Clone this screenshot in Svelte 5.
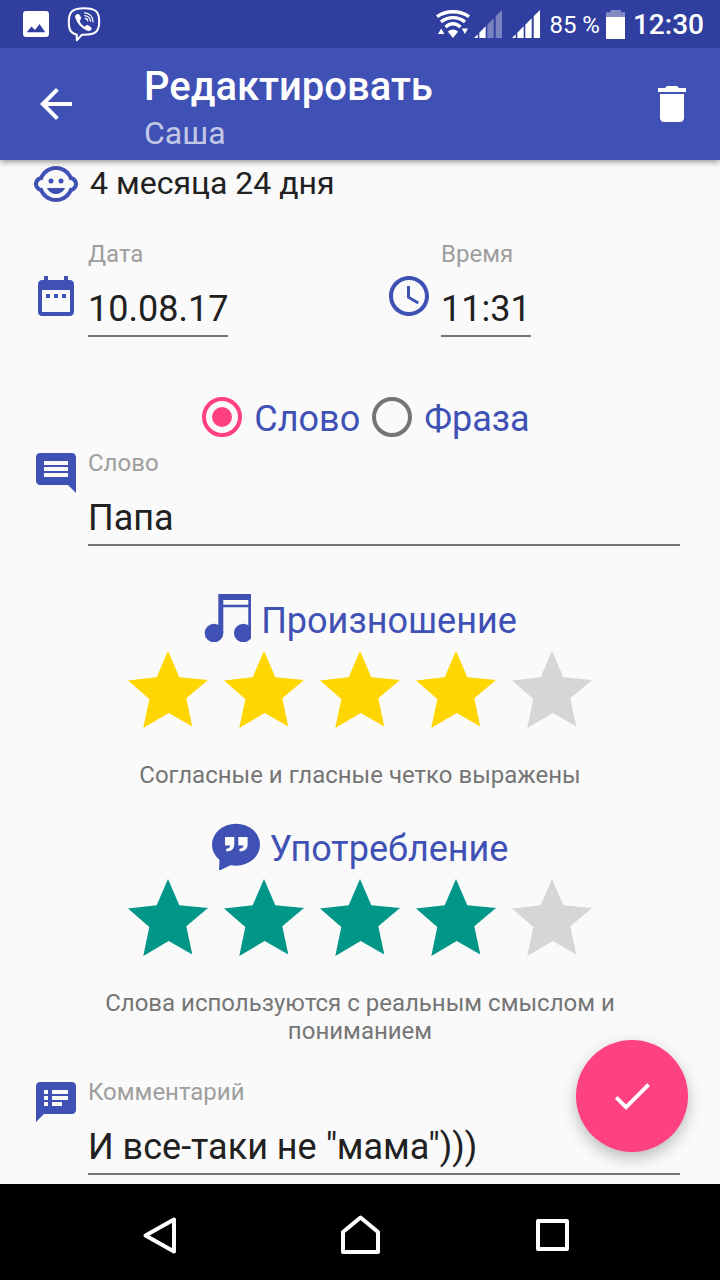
<script>
  let date = $state('10.08.17');
  let time = $state('11:31');
  let kind = $state('word');
  let word = $state('Папа');
  let comment = $state('И все-таки не "мама")))');

  let ratings = $state([
    {
      id: 'speech',
      title: 'Произношение',
      value: 4,
      tone: 'gold',
      note: 'Согласные и гласные четко выражены',
    },
    {
      id: 'usage',
      title: 'Употребление',
      value: 4,
      tone: 'teal',
      note: 'Слова используются с реальным смыслом и пониманием',
    },
  ]);

  const kinds = [
    { id: 'word', label: 'Слово' },
    { id: 'phrase', label: 'Фраза' },
  ];

  const icons = {
    back: 'M20 11H7.83l5.59-5.59L12 4l-8 8 8 8 1.41-1.41L7.83 13H20v-2z',
    trash: 'M6 19c0 1.1.9 2 2 2h8c1.1 0 2-.9 2-2V7H6v12zM19 4h-3.5l-1-1h-5l-1 1H5v2h14V4z',
    child:
      'M22.94 12.66c.04-.21.06-.43.06-.66s-.02-.45-.06-.66c-.25-1.51-1.36-2.74-2.81-3.17-.53-1.12-1.28-2.1-2.19-2.91C16.36 3.85 14.28 3 12 3s-4.36.85-5.94 2.26c-.92.81-1.67 1.8-2.19 2.91-1.45.43-2.56 1.65-2.81 3.17-.04.21-.06.43-.06.66s.02.45.06.66c.25 1.51 1.36 2.74 2.81 3.17.52 1.11 1.27 2.09 2.17 2.89C7.62 20.14 9.71 21 12 21s4.38-.86 5.97-2.28c.9-.8 1.65-1.79 2.17-2.89 1.44-.43 2.55-1.65 2.8-3.17zM19 14c-.1 0-.19-.02-.29-.03-.2.67-.49 1.29-.86 1.86C16.6 17.74 14.45 19 12 19s-4.6-1.26-5.85-3.17c-.37-.57-.66-1.19-.86-1.86-.1.01-.19.03-.29.03-1.1 0-2-.9-2-2s.9-2 2-2c.1 0 .19.02.29.03.2-.67.49-1.29.86-1.86C7.4 6.26 9.55 5 12 5s4.6 1.26 5.85 3.17c.37.57.66 1.19.86 1.86.1-.01.19-.03.29-.03 1.1 0 2 .9 2 2s-.9 2-2 2zM7.5 14c.76 1.77 2.49 3 4.5 3s3.74-1.23 4.5-3h-9z',
    calendar:
      'M9 11H7v2h2v-2zm4 0h-2v2h2v-2zm4 0h-2v2h2v-2zm2-7h-1V2h-2v2H8V2H6v2H5c-1.11 0-1.99.9-1.99 2L3 20c0 1.1.89 2 2 2h14c1.1 0 2-.9 2-2V6c0-1.1-.9-2-2-2zm0 16H5V9h14v11z',
    clock:
      'M11.99 2C6.47 2 2 6.48 2 12s4.47 10 9.99 10C17.52 22 22 17.52 22 12S17.52 2 11.99 2zM12 20c-4.42 0-8-3.58-8-8s3.58-8 8-8 8 3.58 8 8-3.58 8-8 8zm.5-13H11v6l5.25 3.15.75-1.23-4.5-2.67z',
    comment:
      'M21.99 4c0-1.1-.89-2-1.99-2H4c-1.1 0-2 .9-2 2v12c0 1.1.9 2 2 2h14l4 4-.01-18zM18 14H6v-2h12v2zm0-3H6V9h12v2zm0-3H6V6h12v2z',
    notes:
      'M20 2H4c-1.1 0-1.99.9-1.99 2L2 22l4-4h14c1.1 0 2-.9 2-2V4c0-1.1-.9-2-2-2zM8 14H6v-2h2v2zm0-3H6V9h2v2zm0-3H6V6h2v2zm7 6h-5v-2h5v2zm3-3h-8V9h8v2zm0-3h-8V6h8v2z',
    done: 'M9 16.2L4.8 12l-1.4 1.4L9 19 21 7l-1.4-1.4L9 16.2z',
  };
</script>

{#snippet icon(path)}
  <svg class="icon" viewBox="0 0 24 24" aria-hidden="true"><path d={path} /></svg>
{/snippet}

{#snippet signal(weak)}
  <svg class="signal" viewBox="0 0 28 28" aria-hidden="true">
    <path d="M0 28L3.7 24.3V28ZM5.3 28V22.7L11.7 16.3V28Z" />
    <path opacity={weak ? 0.35 : 1} d="M13.3 28V14.7L19.7 8.3V28ZM21.7 28V6.3L28 0V28Z" />
  </svg>
{/snippet}

<div class="screen">
  <div class="top">
    <div class="status">
      <div class="notices">
        <svg class="picture" viewBox="0 0 26 26" aria-hidden="true">
          <path fill-rule="evenodd" d="M3 0H23Q26 0 26 3V23Q26 26 23 26H3Q0 26 0 23V3Q0 0 3 0ZM3.700 21.300H22.300L16.500 13L12 19L8.500 15.500Z" />
        </svg>
        <svg class="viber" viewBox="0 0 36 36" aria-hidden="true">
          <path
            fill="none"
            stroke="currentColor"
            stroke-width="2"
            stroke-linejoin="round"
            d="M9.500 28.200C5 26.800 3 24.500 2.800 17C2.600 6 6 2.200 18 2.200C30 2.200 33.200 6 33.200 15.500C33.200 25 30 28.700 18 28.700L16 28.600L10.800 34.200V28.600Z"
          />
          <path d="M10.500 8.500C12 7.500 13 8 14.500 10.500C15.600 12.300 15.300 13 13.600 14.500C14.300 17.500 16.300 19.700 19 20.700C20.500 18.800 21.300 18.600 23.300 20C26 21.800 26.300 22.700 25 24C23.700 25.300 22.500 25.300 20.300 24.200C15 21.500 11.200 17.500 9.300 12C8.700 10.200 9.200 9.300 10.500 8.500Z" />
          <path
            fill="none"
            stroke="currentColor"
            stroke-width="1.200"
            stroke-linecap="round"
            d="M18.500 6.800C23.500 7.200 27 10.500 27 15.800M18.800 9.600C22.300 10 24.300 12 24.400 15.200M19.200 12.300C20.800 12.500 21.700 13.300 21.800 14.900"
          />
        </svg>
      </div>
      <div class="system">
        <svg class="wifi" viewBox="0 0 34 28" aria-hidden="true">
          <path
            fill="none"
            stroke="currentColor"
            stroke-width="3.300"
            d="M1 6.600C10 .1 24 .1 33 6.600M5 11.900C12 6.200 22 6.200 29 11.900M9.500 17.200C14 12.600 20 12.600 24.500 17.200"
          />
          <path d="M17 28L11.800 21.500Q17 17.300 22.200 21.500ZM2 24L5.200 18.500L8.400 24ZM25.800 18.500H32L28.900 24Z" />
        </svg>
        {@render signal(true)}
        <span class="gap"></span>
        {@render signal(false)}
        <span class="percent">85 %</span>
        <svg class="battery" viewBox="0 0 19 29" aria-hidden="true">
          <path opacity=".4" d="M4.500 0H15V2.300H19V7H0V2.300H4.500Z" />
          <path d="M0 7H19V29H0Z" />
        </svg>
        <span class="now">12:30</span>
      </div>
    </div>

    <header class="bar">
      <button class="plain" type="button" aria-label="Назад">{@render icon(icons.back)}</button>
      <div class="titles">
        <h1>Редактировать</h1>
        <p>Саша</p>
      </div>
      <button class="plain" type="button" aria-label="Удалить">{@render icon(icons.trash)}</button>
    </header>
  </div>

  <main>
    <div class="age">
      <svg class="icon" viewBox="0 0 24 24" aria-hidden="true">
        <circle cx="14.5" cy="10.5" r="1.25" />
        <circle cx="9.5" cy="10.5" r="1.25" />
        <path d={icons.child} />
      </svg>
      <span>4 месяца 24 дня</span>
    </div>

    <div class="when">
      <div class="field low">
        {@render icon(icons.calendar)}
        <div class="entry">
          <label for="date">Дата</label>
          <input class="fit" id="date" type="text" size="7" bind:value={date} />
        </div>
      </div>
      <div class="field low">
        {@render icon(icons.clock)}
        <div class="entry">
          <label for="time">Время</label>
          <input class="fit" id="time" type="text" size="4" bind:value={time} />
        </div>
      </div>
    </div>

    <div class="kinds" role="radiogroup" aria-label="Тип записи">
      {#each kinds as k (k.id)}
        <label class="kind">
          <input type="radio" name="kind" value={k.id} bind:group={kind} />
          <span>{k.label}</span>
        </label>
      {/each}
    </div>

    <div class="field">
      {@render icon(icons.comment)}
      <div class="entry">
        <label for="word">Слово</label>
        <input id="word" type="text" bind:value={word} />
      </div>
    </div>

    <div class="ratings">
      {#each ratings as r (r.id)}
        <section>
          <h2>
            {#if r.id === 'speech'}
              <svg class="icon" viewBox="0 0 48 48" aria-hidden="true">
                <path d="M15.300 0H48V39H45.300V13.300H20.300V39H15.300ZM20.300 6V10.700H45.300V6Z" fill-rule="evenodd" />
                <circle cx="11" cy="39" r="9.3" />
                <circle cx="40.300" cy="39" r="9.3" />
              </svg>
            {:else}
              <svg class="icon" viewBox="0 0 48 48" aria-hidden="true">
                <ellipse cx="24" cy="22.700" rx="24" ry="21" />
                <path d="M7.700 34L7 48H8.500L20 42.500Z" />
                <path
                  fill="#fafafa"
                  d="M13 15H22.300V22.500C22.300 27 19 29.400 14.500 29.400L14 27C16.500 26.600 18.300 25.200 18.300 23.500H13ZM26.300 15H35.600V22.500C35.600 27 32.300 29.400 27.800 29.400L27.300 27C29.800 26.600 31.600 25.200 31.600 23.500H26.300Z"
                />
              </svg>
            {/if}
            <span>{r.title}</span>
          </h2>
          <div class="stars {r.tone}">
            {#each [1, 2, 3, 4, 5] as n (n)}
              <button
                type="button"
                class="star"
                class:on={n <= r.value}
                aria-label="{r.title}: {n}"
                aria-pressed={n <= r.value}
                onclick={() => (r.value = n)}
              >
                <svg viewBox="0 0 96 96" aria-hidden="true">
                  <path d="M48 9L59.300 35.300L88 38L66.300 56.300L72.300 84.500L48.700 71L23.300 86L29.300 57L8 38.500L36.700 35.300Z" />
                </svg>
              </button>
            {/each}
          </div>
          <p class="note">{r.note}</p>
        </section>
      {/each}
    </div>

    <div class="field">
      {@render icon(icons.notes)}
      <div class="entry">
        <label for="comment">Комментарий</label>
        <input id="comment" type="text" bind:value={comment} />
      </div>
    </div>
  </main>

  <div class="bottom">
    <button class="fab" type="button" aria-label="Сохранить">{@render icon(icons.done)}</button>
    <nav aria-label="Система">
      <button type="button" aria-label="Назад">
        <svg viewBox="0 0 56 56" aria-hidden="true"><path d="M5.500 31.500L34 15.500V47.500Z" /></svg>
      </button>
      <button type="button" aria-label="Домой">
        <svg viewBox="0 0 56 56" aria-hidden="true"><path d="M11 28L28.500 13.500L46 28V48H11Z" /></svg>
      </button>
      <button type="button" aria-label="Недавние">
        <svg viewBox="0 0 56 56" aria-hidden="true"><path d="M14 17H43V45H14Z" /></svg>
      </button>
    </nav>
  </div>
</div>

<style>
  :global(body) {
    background: #fafafa;
  }

  .screen {
    display: flex;
    flex-direction: column;
    min-height: 100vh;
    background: #fafafa;
    color: #212121;
    font-family: Roboto, 'Noto Sans', sans-serif;
  }

  h1,
  h2,
  p {
    margin: 0;
    font-weight: 400;
  }

  button {
    display: flex;
    align-items: center;
    justify-content: center;
    padding: 0;
    border: 0;
    background: none;
    color: inherit;
    cursor: pointer;
  }

  svg {
    display: block;
    flex: none;
    fill: currentColor;
  }

  .icon {
    width: 48px;
    height: 48px;
  }

  .top {
    position: sticky;
    top: 0;
    z-index: 2;
    color: #fff;
    box-shadow: 0 2px 6px rgba(0, 0, 0, 0.4);
  }

  .status {
    display: flex;
    align-items: center;
    justify-content: space-between;
    height: 48px;
    padding: 0 16px 0 23px;
    background: #303f9f;
  }

  .notices,
  .system {
    display: flex;
    align-items: center;
  }

  .notices {
    gap: 17px;
  }

  .system {
    gap: 4px;
  }

  .picture {
    width: 26px;
    height: 26px;
  }

  .viber {
    width: 36px;
    height: 36px;
  }

  .wifi {
    width: 34px;
    height: 28px;
  }

  .signal {
    width: 28px;
    height: 28px;
  }

  .gap {
    width: 2px;
  }

  .percent {
    padding: 2px 2px 0 5px;
    font-size: 24px;
    line-height: 28px;
  }

  .battery {
    width: 19px;
    height: 29px;
  }

  .now {
    padding: 2px 0 0 4px;
    font-size: 28px;
    font-weight: 500;
    line-height: 32px;
  }

  .bar {
    display: flex;
    align-items: center;
    height: 112px;
    padding: 0 24px 0 32px;
    background: #3f51b5;
  }

  .titles {
    flex: 1;
    min-width: 0;
    padding: 8px 0 0 64px;
  }

  h1 {
    font-size: 40px;
    font-weight: 500;
    line-height: 50px;
  }

  .titles p {
    color: rgba(255, 255, 255, 0.7);
    font-size: 32px;
    line-height: 42px;
  }

  main {
    flex: 1;
    padding-bottom: 9px;
  }

  .age {
    display: flex;
    align-items: flex-start;
    gap: 10px;
    height: 48px;
    padding: 0 40px 0 32px;
    font-size: 32px;
    line-height: 46px;
  }

  .age .icon,
  .field .icon,
  h2 {
    color: #3f51b5;
  }

  .when {
    display: grid;
    grid-template-columns: 1fr 1fr;
    padding: 32px 0 48px;
  }

  .when .field {
    padding-right: 0;
  }

  .when .field + .field {
    padding-left: 25px;
  }

  .field {
    display: flex;
    align-items: flex-start;
    gap: 8px;
    padding: 0 40px 0 32px;
  }

  .low .icon {
    margin-top: 32px;
  }

  .entry {
    display: flex;
    flex: 1;
    flex-direction: column;
    align-items: flex-start;
    min-width: 0;
  }

  .entry label {
    color: #9e9e9e;
    font-size: 24px;
    line-height: 28px;
  }

  .entry input {
    box-sizing: border-box;
    width: 100%;
    height: 69px;
    margin: 0;
    padding: 15px 0 0;
    border: 0;
    border-bottom: 2px solid #757575;
    border-radius: 0;
    outline: 0;
    background: none;
    color: #212121;
    font-family: inherit;
    font-size: 36px;
  }

  .entry .fit {
    width: auto;
    field-sizing: content;
  }

  .kinds {
    display: flex;
    justify-content: center;
  }

  .kind {
    display: flex;
    align-items: center;
    height: 64px;
    color: #3f51b5;
    font-size: 36px;
    line-height: 42px;
    cursor: pointer;
  }

  .kind span {
    padding-top: 4px;
  }

  h2 span {
    padding-top: 6px;
  }

  .kind input {
    display: grid;
    place-items: center;
    box-sizing: border-box;
    width: 40px;
    height: 40px;
    margin: 0 12px;
    border: 4px solid #757575;
    border-radius: 50%;
    appearance: none;
  }

  .kind input:checked {
    border-color: #ff4081;
  }

  .kind input:checked::before {
    width: 20px;
    height: 20px;
    border-radius: 50%;
    background: #ff4081;
    content: '';
  }

  .ratings {
    display: flex;
    flex-direction: column;
    gap: 33px;
    padding: 48px 40px 33px;
  }

  h2 {
    display: flex;
    align-items: center;
    justify-content: center;
    gap: 10px;
    height: 48px;
    font-size: 36px;
    line-height: 42px;
  }

  .stars {
    display: flex;
    justify-content: center;
  }

  .star {
    width: 96px;
    height: 96px;
    color: #d6d6d6;
  }

  .star svg {
    width: 96px;
    height: 96px;
  }

  .gold .on {
    color: #ffd600;
  }

  .teal .on {
    color: #009688;
  }

  .note {
    padding-top: 23px;
    color: #757575;
    font-size: 24px;
    line-height: 28px;
    text-align: center;
  }

  .bottom {
    position: sticky;
    bottom: 0;
    z-index: 1;
  }

  .fab {
    position: absolute;
    right: 32px;
    bottom: 128px;
    width: 112px;
    height: 112px;
    border-radius: 50%;
    background: #ff4081;
    color: #fff;
    box-shadow: 0 6px 16px rgba(0, 0, 0, 0.25);
  }

  nav {
    display: flex;
    justify-content: space-around;
    height: 96px;
    padding: 0 10%;
    background: #000;
    color: #fff;
  }

  nav button {
    flex: 1;
  }

  nav svg {
    width: 56px;
    height: 56px;
    fill: none;
    stroke: currentColor;
    stroke-width: 4px;
    stroke-linejoin: round;
  }
</style>
